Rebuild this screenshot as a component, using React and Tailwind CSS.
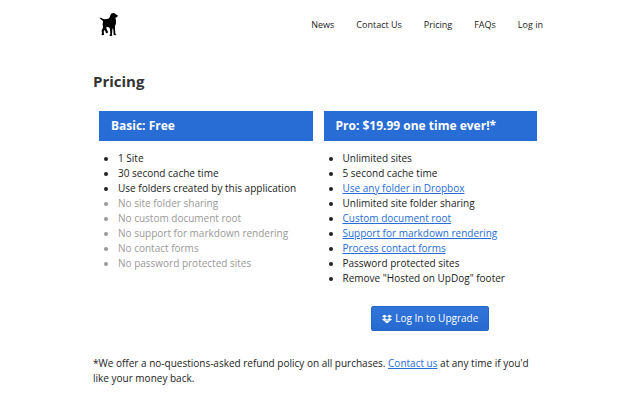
import React from 'react';
import { FaDropbox } from 'react-icons/fa';

const NAV_LINKS = ['News', 'Contact Us', 'Pricing', 'FAQs', 'Log in'];

const BASIC_FEATURES = [
    { text: '1 Site' },
    { text: '30 second cache time' },
    { text: 'Use folders created by this application' },
    { text: 'No site folder sharing', disabled: true },
    { text: 'No custom document root', disabled: true },
    { text: 'No support for markdown rendering', disabled: true },
    { text: 'No contact forms', disabled: true },
    { text: 'No password protected sites', disabled: true }
];

const PRO_FEATURES = [
    { text: 'Unlimited sites' },
    { text: '5 second cache time' },
    { text: 'Use any folder in Dropbox', href: '#folders' },
    { text: 'Unlimited site folder sharing' },
    { text: 'Custom document root', href: '#document-root' },
    { text: 'Support for markdown rendering', href: '#markdown' },
    { text: 'Process contact forms', href: '#forms' },
    { text: 'Password protected sites' },
    { text: 'Remove "Hosted on UpDog" footer' }
];

const DogLogo = () => (
    <svg viewBox="27 21 60 75" className="block h-[25px] w-5" fill="#000" aria-hidden="true">
        <path d="M29 38 L33 38 Q38 42 44 43 L55 41 Q60 38 61 31 Q62 25 69 24 Q75 23 77 28 L83 31 Q84 35 80 37 L76 38 Q78 44 78 50 Q79 57 75 62 L75 74 L76 86 L79 89 L77 91 L71 90 L70 74 L69 68 L67 74 L66 88 L67 92 L60 93 L58 91 L61 88 L60 72 L57 67 L50 65 L49 69 L51 75 L54 80 L53 84 L48 85 L46 78 L43 75 L41 80 L42 87 L42 90 L36 91 L34 89 L36 86 L35 76 L39 68 L38 58 L39 48 Q33 44 29 40 Z" />
    </svg>
);

const Plan = ({ title, features, children }) => (
    <section className="flex-1">
        <h2 className="bg-[#286dd5] px-3 py-1.5 text-xs leading-[18px] font-bold text-white">
            {title}
        </h2>
        <ul className="mt-2.5 list-disc pl-[19px]">
            {features.map((feature) => (
                <li key={feature.text} className={feature.disabled ? 'text-[#999]' : undefined}>
                    {feature.href ? (
                        <a href={feature.href} className="text-[#286dd5] underline">{feature.text}</a>
                    ) : (
                        feature.text
                    )}
                </li>
            ))}
        </ul>
        {children}
    </section>
);

const App = () => (
    <div className="min-h-screen bg-white pr-1 font-['Open_Sans',sans-serif] text-[10px] leading-[15px] text-[#222]">
        <div className="mx-auto max-w-[450px]">
            <header className="flex items-center justify-between pt-3">
                <a href="#home" aria-label="UpDog" className="ml-1.5">
                    <DogLogo />
                </a>
                <nav className="flex gap-[22px] text-[9px]">
                    {NAV_LINKS.map((link) => (
                        <a key={link} href="#nav">{link}</a>
                    ))}
                </nav>
            </header>

            <main>
                <h1 className="mt-8 text-[15px] leading-6 font-bold text-[#333]">Pricing</h1>

                <div className="mt-[18px] flex gap-[11px] px-1.5">
                    <Plan title="Basic: Free" features={BASIC_FEATURES} />
                    <Plan title="Pro: $19.99 one time ever!*" features={PRO_FEATURES}>
                        <div className="mt-5 flex justify-center">
                            <button
                                type="button"
                                className="flex h-[25px] items-center gap-[3px] rounded-xs border border-[#2765c8] bg-linear-to-b from-[#3275d9] to-[#266ad1] px-2.5 font-medium text-white"
                            >
                                <FaDropbox className="size-2.5" />
                                Log In to Upgrade
                            </button>
                        </div>
                    </Plan>
                </div>

                <p className="mt-[25px]">
                    *We offer a no-questions-asked refund policy on all purchases.{' '}
                    <a href="#contact" className="text-[#286dd5] underline">Contact us</a>{' '}
                    at any time if you'd like your money back.
                </p>
            </main>
        </div>
    </div>
);

export default App;
